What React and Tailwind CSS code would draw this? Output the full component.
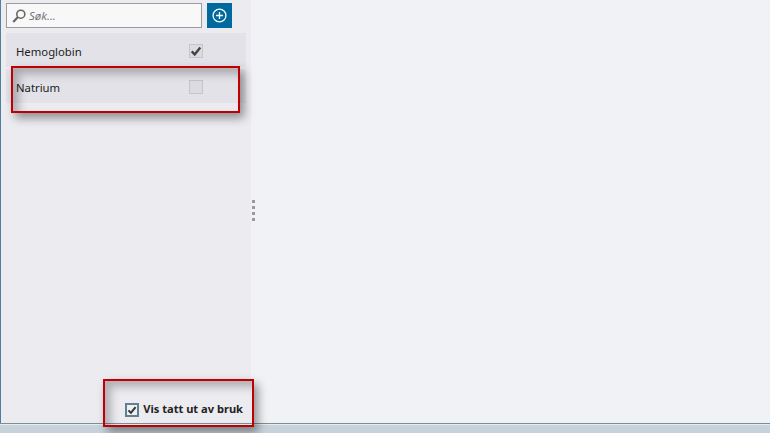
function Dots() {
  return (
    <div className="flex flex-col gap-[3px] mb-[2px]">
      <span className="w-[3px] h-[3px] bg-[#9a9a9e]" />
      <span className="w-[3px] h-[3px] bg-[#9a9a9e]" />
      <span className="w-[3px] h-[3px] bg-[#9a9a9e]" />
      <span className="w-[3px] h-[3px] bg-[#9a9a9e]" />
    </div>
  )
}

function Check({ className }) {
  return (
    <svg viewBox="0 0 14 14" className={className} fill="none" stroke="currentColor" strokeWidth="2.8">
      <path d="M2 7.5 L5.5 11 L12 3" />
    </svg>
  )
}

function Row({ name, checked }) {
  return (
    <div className="h-[34px] bg-[#e3e2e8] pl-[10px] pt-[2px] flex items-center justify-between pr-[43px]">
      <span className="text-[11.3px] leading-[16px] pt-[1px] text-[#222]">{name}</span>
      <span className="w-[14px] h-[14px] border border-[#c6c6ca] bg-[#dcdce0] flex items-center justify-center text-[#444]">
        {checked && <Check className="w-[12px] h-[12px]" />}
      </span>
    </div>
  )
}

function Callout({ className }) {
  return <div className={`absolute border-[2px] border-[#c00000] shadow-[4px_5px_9px_rgba(0,0,0,0.4),inset_6px_6px_9px_rgba(0,0,0,0.25)] ${className}`} />
}

export default function App() {
  return (
    <div className="relative w-[770px] h-[433px] overflow-hidden flex flex-col bg-[#f1f2f5] font-['Noto_Sans','Open_Sans',sans-serif]">
      <div className="flex-1 flex min-h-0">
        <div className="w-[251px] bg-[#ecebf0] border-l border-[#4f7f9c] pl-[5px] pr-[5px] pt-[3px] flex flex-col relative">
          <div className="flex gap-[5px]">
            <div className="w-[196px] h-[25px] bg-[#f8f8f9] border border-[#9c9c9c] flex items-center gap-[3px] pl-[5px]">
              <svg viewBox="0 0 14 14" className="w-[14px] h-[14px]" fill="none" stroke="#666" strokeWidth="1.6">
                <circle cx="8.8" cy="5.2" r="4" />
                <path d="M6 8 L1.2 13" strokeWidth="2.2" />
              </svg>
              <span className="text-[11.5px] italic text-[#777]">Søk...</span>
            </div>
            <div className="w-[25px] h-[25px] bg-[#006a9e] flex items-center justify-center">
              <svg viewBox="0 0 14 14" className="w-[15px] h-[15px]" fill="none" stroke="white" strokeWidth="1.2">
                <circle cx="7" cy="7" r="6" />
                <path d="M7 3.8 V10.2 M3.8 7 H10.2" />
              </svg>
            </div>
          </div>
          <div className="mt-[5px] flex flex-col gap-[2px]">
            <Row name="Hemoglobin" checked />
            <Row name="Natrium" />
          </div>
          <div className="mt-auto mb-[5px] self-end pr-[3px] flex items-center gap-[4px]">
            <span className="w-[14px] h-[14px] border-[2px] border-[#5f8091] bg-[#eef0f3] flex items-center justify-center text-[#333]">
              <Check className="w-[12px] h-[12px]" />
            </span>
            <span className="text-[11.1px] font-bold text-[#222]">Vis tatt ut av bruk</span>
          </div>
        </div>
        <div className="flex-1 pl-[1px] flex items-center">
          <Dots />
        </div>
      </div>
      <div className="h-[10px] bg-[#c8d2da] border-t-[1px] border-[#7a9098]">
        <div className="h-[1px] bg-[#e8ecef]" />
      </div>
      <Callout className="left-[11px] top-[66px] w-[229px] h-[47px]" />
      <Callout className="left-[103px] top-[379px] w-[151px] h-[48px]" />
    </div>
  )
}
